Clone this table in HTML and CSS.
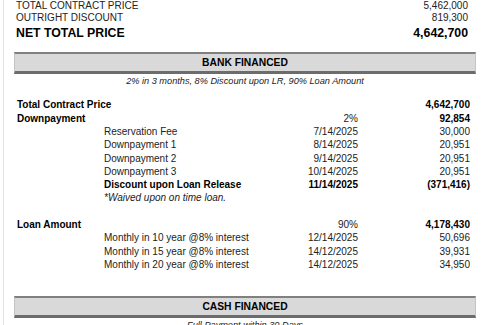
FILE: index.html
```html
<!DOCTYPE html>
<html>
<head>
<meta charset="utf-8">
<link rel="stylesheet" href="styles.css">
</head>
<body>
<div class="sheet">
  <div class="summary">
    <div class="sum-row"><span>TOTAL CONTRACT PRICE</span><span>5,462,000</span></div>
    <div class="sum-row"><span>OUTRIGHT DISCOUNT</span><span>819,300</span></div>
    <div class="sum-row sum-net"><span>NET TOTAL PRICE</span><span>4,642,700</span></div>
  </div>

  <div class="bar">BANK FINANCED</div>
  <div class="note">2% in 3 months, 8% Discount upon LR, 90% Loan Amount</div>

  <div class="grid">
    <div class="main b">Total Contract Price</div><div class="date"></div><div class="amt b">4,642,700</div>
    <div class="main b">Downpayment</div><div class="date">2%</div><div class="amt b">92,854</div>
    <div class="gap"></div><div class="sub">Reservation Fee</div><div class="date">7/14/2025</div><div class="amt">30,000</div>
    <div class="gap"></div><div class="sub">Downpayment 1</div><div class="date">8/14/2025</div><div class="amt">20,951</div>
    <div class="gap"></div><div class="sub">Downpayment 2</div><div class="date">9/14/2025</div><div class="amt">20,951</div>
    <div class="gap"></div><div class="sub">Downpayment 3</div><div class="date">10/14/2025</div><div class="amt">20,951</div>
    <div class="gap"></div><div class="sub b">Discount upon Loan Release</div><div class="date b">11/14/2025</div><div class="amt b">(371,416)</div>
    <div class="gap"></div><div class="sub i">*Waived upon on time loan.</div><div class="date"></div><div class="amt"></div>
    <div class="blank"></div>
    <div class="main b">Loan Amount</div><div class="date">90%</div><div class="amt b">4,178,430</div>
    <div class="gap"></div><div class="sub">Monthly in 10 year @8% interest</div><div class="date">12/14/2025</div><div class="amt">50,696</div>
    <div class="gap"></div><div class="sub">Monthly in 15 year @8% interest</div><div class="date">14/12/2025</div><div class="amt">39,931</div>
    <div class="gap"></div><div class="sub">Monthly in 20 year @8% interest</div><div class="date">14/12/2025</div><div class="amt">34,950</div>
  </div>

  <div class="bar bar-cash">CASH FINANCED</div>
  <div class="note">Full Payment within 30 Days</div>
</div>
</body>
</html>
```
FILE: styles.css
```css
html, body {
  margin: 0;
  padding: 0;
  background: #fff;
}
body {
  font-family: "Liberation Sans", Arial, sans-serif;
  color: #222;
  height: 325px;
  overflow: hidden;
}
.sheet {
  margin-left: 3px;
  border-left: 1px solid #e2e2e2;
  padding-left: 10px;
  width: 462px;
  min-height: 325px;
}
.summary {
  padding: 0 8px 0 2px;
}
.sum-row {
  display: flex;
  justify-content: space-between;
  font-size: 10px;
  line-height: 12px;
}
.sum-net {
  font-size: 12.3px;
  font-weight: bold;
  line-height: 18px;
  color: #000;
}
.bar {
  margin-top: 10px;
  height: 17px;
  line-height: 17px;
  background: #d9d9d9;
  border-top: 2px solid #808080;
  border-bottom: 3px solid #6c6c6c;
  border-left: 1px solid #c4c4c4;
  border-right: 1px solid #c4c4c4;
  text-align: center;
  font-weight: bold;
  font-size: 10.3px;
  color: #000;
}
.bar-cash {
  margin-top: 24.75px;
}
.note {
  margin-top: 1px;
  line-height: 12px;
  font-size: 9.2px;
  font-style: italic;
  text-align: center;
  color: #222;
}
.grid {
  margin-top: 11.35px;
  padding: 0 6px 0 3px;
  display: grid;
  grid-template-columns: 87px 174px 80px 112px;
  grid-auto-rows: 13.3px;
  font-size: 10px;
  line-height: 13.3px;
}
.main {
  grid-column: 1 / span 2;
}
.blank {
  grid-column: 1 / -1;
}
.date, .amt {
  text-align: right;
}
.b {
  font-weight: bold;
  color: #000;
}
.i {
  font-style: italic;
}
```
